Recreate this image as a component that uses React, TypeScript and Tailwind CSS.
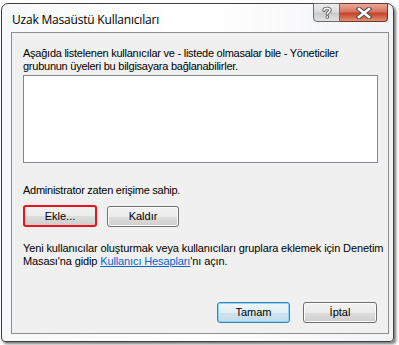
const btn =
  "h-[21px] w-[72px] rounded-[3px] border border-[#707070] bg-[linear-gradient(#f2f2f2_0%,#ebebeb_50%,#dddddd_50%,#cfcfcf_100%)] shadow-[inset_0_0_0_1px_#fcfcfc] text-[11px] text-black leading-none flex items-center justify-center";

function HelpGlyph() {
  return (
    <svg width="12" height="13" viewBox="0 0 12 13">
      <path
        d="M3 4.2 C3 1.8 9 1.8 9 4.2 C9 6.2 6.3 6 6.3 8"
        fill="none"
        stroke="#5a5a5a"
        strokeWidth="3.4"
        strokeLinecap="round"
      />
      <path
        d="M3 4.2 C3 1.8 9 1.8 9 4.2 C9 6.2 6.3 6 6.3 8"
        fill="none"
        stroke="#ffffff"
        strokeWidth="1.6"
        strokeLinecap="round"
      />
      <circle cx="6.3" cy="11" r="1.8" fill="#5a5a5a" />
      <circle cx="6.3" cy="11" r="0.9" fill="#fff" />
    </svg>
  );
}

function CloseGlyph() {
  return (
    <svg width="16" height="12" viewBox="0 0 16 12">
      <path d="M3 2 L13 10 M13 2 L3 10" stroke="#4b4b4b" strokeWidth="4.6" strokeLinecap="square" />
      <path d="M3 2 L13 10 M13 2 L3 10" stroke="#ffffff" strokeWidth="2.6" strokeLinecap="square" />
    </svg>
  );
}

export default function App() {
  return (
    <div className="w-[399px] h-[345px] bg-white overflow-hidden pt-[3px] pl-[1px] font-['Liberation_Sans',Arial,sans-serif]">
      <div className="w-[393px] h-[339px] flex flex-col rounded-t-[7px] rounded-b-[4px] border border-[#3f3f3f] bg-[linear-gradient(90deg,#f7f8f9,#ffffff_50%,#f2f3f5)] shadow-[2px_2px_3px_rgba(0,0,0,0.55)]">
        {/* title bar */}
        <div className="h-[28px] flex items-start pl-[10px] pr-[5px]">
          <span className="mt-[9px] text-[12px] leading-[14px] text-black font-['Open_Sans',sans-serif] tracking-[-0.2px]">
            Uzak Masaüstü Kullanıcıları
          </span>
          <div className="ml-auto -mt-[1px] flex">
            <div className="w-[27px] h-[19px] rounded-bl-[4px] border border-[#6d6d6d] bg-[linear-gradient(#eeeeee,#dcdcdc_45%,#cacaca_55%,#e2e2e2)] flex items-center justify-center">
              <HelpGlyph />
            </div>
            <div className="w-[48px] h-[19px] rounded-br-[4px] border border-l-0 border-[#6d3a30] bg-[linear-gradient(#e9a99a,#d8765f_45%,#c7432a_55%,#e08f70)] flex items-center justify-center">
              <CloseGlyph />
            </div>
          </div>
        </div>

        {/* client area */}
        <div className="ml-[9px] w-[378px] h-[302px] border border-[#8e8f8f] bg-[#f0f0f0] pl-[11px] pr-[10px] flex flex-col text-[11px] leading-[13px] tracking-[-0.25px] text-black">
          <p className="mt-[14px] whitespace-nowrap">
            Aşağıda listelenen kullanıcılar ve - listede olmasalar bile - Yöneticiler
            <br />
            grubunun üyeleri bu bilgisayara bağlanabilirler.
          </p>
          <div className="mt-[2px] w-[355px] h-[88px] border border-[#828790] bg-white" />
          <p className="mt-[21px] whitespace-nowrap">Administrator zaten erişime sahip.</p>
          <div className="mt-[8px] flex gap-[10px] items-center tracking-normal">
            <div className="w-[74px] h-[22px] rounded-[3px] border-2 border-[#e8141a] bg-[linear-gradient(#f2f2f2_0%,#ebebeb_50%,#dddddd_50%,#cfcfcf_100%)] text-[11px] flex items-center justify-center">
              Ekle...
            </div>
            <div className={btn}>Kaldır</div>
          </div>
          <p className="mt-[15px] whitespace-nowrap tracking-[-0.12px]">
            Yeni kullanıcılar oluşturmak veya kullanıcıları gruplara eklemek için Denetim
            <br />
            Masası'na gidip <span className="text-[#0066cc] underline">Kullanıcı Hesapları</span>'nı açın.
          </p>
          <div className="mt-auto mb-[10px] flex justify-end gap-[13px] pr-[1px] tracking-normal">
            <div className="h-[21px] w-[73px] rounded-[3px] border border-[#3c7fb1] bg-[linear-gradient(#eef6fb_0%,#e2eff7_50%,#cfe3ef_50%,#c4dcea_100%)] shadow-[inset_0_0_0_1px_#8ad6f7] text-[11px] flex items-center justify-center">
              Tamam
            </div>
            <div className={btn.replace("w-[72px]", "w-[74px]")}>İptal</div>
          </div>
        </div>
      </div>
    </div>
  );
}
